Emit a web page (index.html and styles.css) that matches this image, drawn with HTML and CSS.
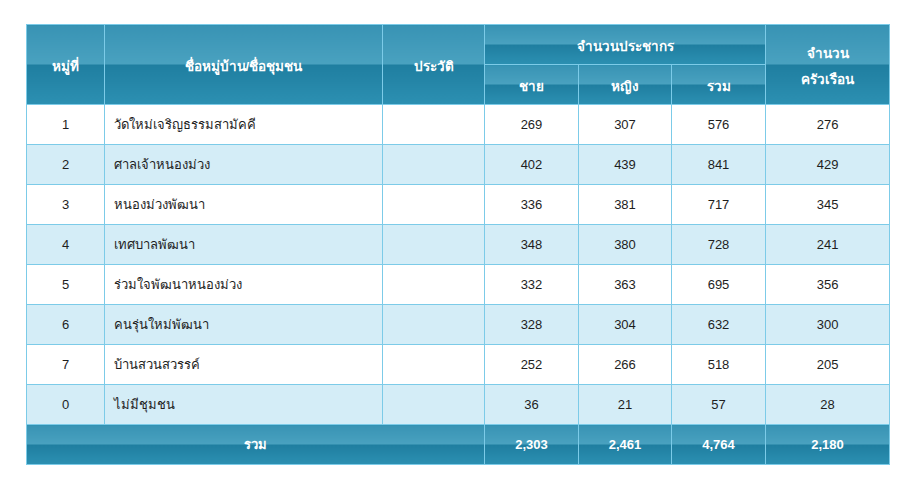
FILE: index.html
```html
<!DOCTYPE html>
<html lang="th">
<head>
<meta charset="utf-8">
<link rel="stylesheet" href="styles.css">
</head>
<body>
<div class="wrap">
<table class="pop">
  <colgroup>
    <col class="c1"><col class="c2"><col class="c3"><col class="c4"><col class="c5"><col class="c6"><col class="c7">
  </colgroup>
  <thead>
    <tr>
      <th rowspan="2">หมู่ที่</th>
      <th rowspan="2">ชื่อหมู่บ้าน/ชื่อชุมชน</th>
      <th rowspan="2">ประวัติ</th>
      <th colspan="3">จำนวนประชากร</th>
      <th rowspan="2" class="two">จำนวน<br>ครัวเรือน</th>
    </tr>
    <tr>
      <th>ชาย</th>
      <th>หญิง</th>
      <th>รวม</th>
    </tr>
  </thead>
  <tbody>
    <tr><td>1</td><td class="name">วัดใหม่เจริญธรรมสามัคคี</td><td></td><td>269</td><td>307</td><td>576</td><td>276</td></tr>
    <tr class="alt"><td>2</td><td class="name">ศาลเจ้าหนองม่วง</td><td></td><td>402</td><td>439</td><td>841</td><td>429</td></tr>
    <tr><td>3</td><td class="name">หนองม่วงพัฒนา</td><td></td><td>336</td><td>381</td><td>717</td><td>345</td></tr>
    <tr class="alt"><td>4</td><td class="name">เทศบาลพัฒนา</td><td></td><td>348</td><td>380</td><td>728</td><td>241</td></tr>
    <tr><td>5</td><td class="name">ร่วมใจพัฒนาหนองม่วง</td><td></td><td>332</td><td>363</td><td>695</td><td>356</td></tr>
    <tr class="alt"><td>6</td><td class="name">คนรุ่นใหม่พัฒนา</td><td></td><td>328</td><td>304</td><td>632</td><td>300</td></tr>
    <tr><td>7</td><td class="name">บ้านสวนสวรรค์</td><td></td><td>252</td><td>266</td><td>518</td><td>205</td></tr>
    <tr class="alt"><td>0</td><td class="name">ไม่มีชุมชน</td><td></td><td>36</td><td>21</td><td>57</td><td>28</td></tr>
  </tbody>
  <tfoot>
    <tr><th colspan="3">รวม</th><th>2,303</th><th>2,461</th><th>4,764</th><th>2,180</th></tr>
  </tfoot>
</table>
</div>
</body>
</html>
```
FILE: styles.css
```css
html, body {
  margin: 0;
  padding: 0;
  background: #ffffff;
}
.wrap {
  padding: 24px 26px;
}
.pop {
  border-collapse: collapse;
  width: 864px;
  table-layout: fixed;
  font-family: Tahoma, "Liberation Sans", "Noto Sans", sans-serif;
  font-size: 13px;
  color: #1e1e1e;
  border: 1px solid #7ccbe8;
}
.c1 { width: 78px; }
.c2 { width: 278px; }
.c3 { width: 102px; }
.c4 { width: 94px; }
.c5 { width: 93px; }
.c6 { width: 94px; }
.c7 { width: 124px; }
.pop th, .pop td {
  border: 1px solid #7ccbe8;
  height: 39px;
  padding: 0;
  text-align: center;
  vertical-align: middle;
}
.pop th {
  color: #ffffff;
  font-size: 13.5px;
  font-weight: bold;
  background: linear-gradient(to bottom, #3893b4 0%, #4aa2c0 50%, #1f7ea0 50%, #2c90b2 100%);
}
.pop thead th {
  height: 37px;
  padding-top: 2px;
}
.pop tfoot th {
  font-size: 13px;
}
.pop th.two {
  line-height: 26px;
  padding-top: 4px;
}
.pop td.name {
  text-align: left;
  padding-left: 9px;
}
.pop tr.alt td {
  background: #d4edf7;
}
```
